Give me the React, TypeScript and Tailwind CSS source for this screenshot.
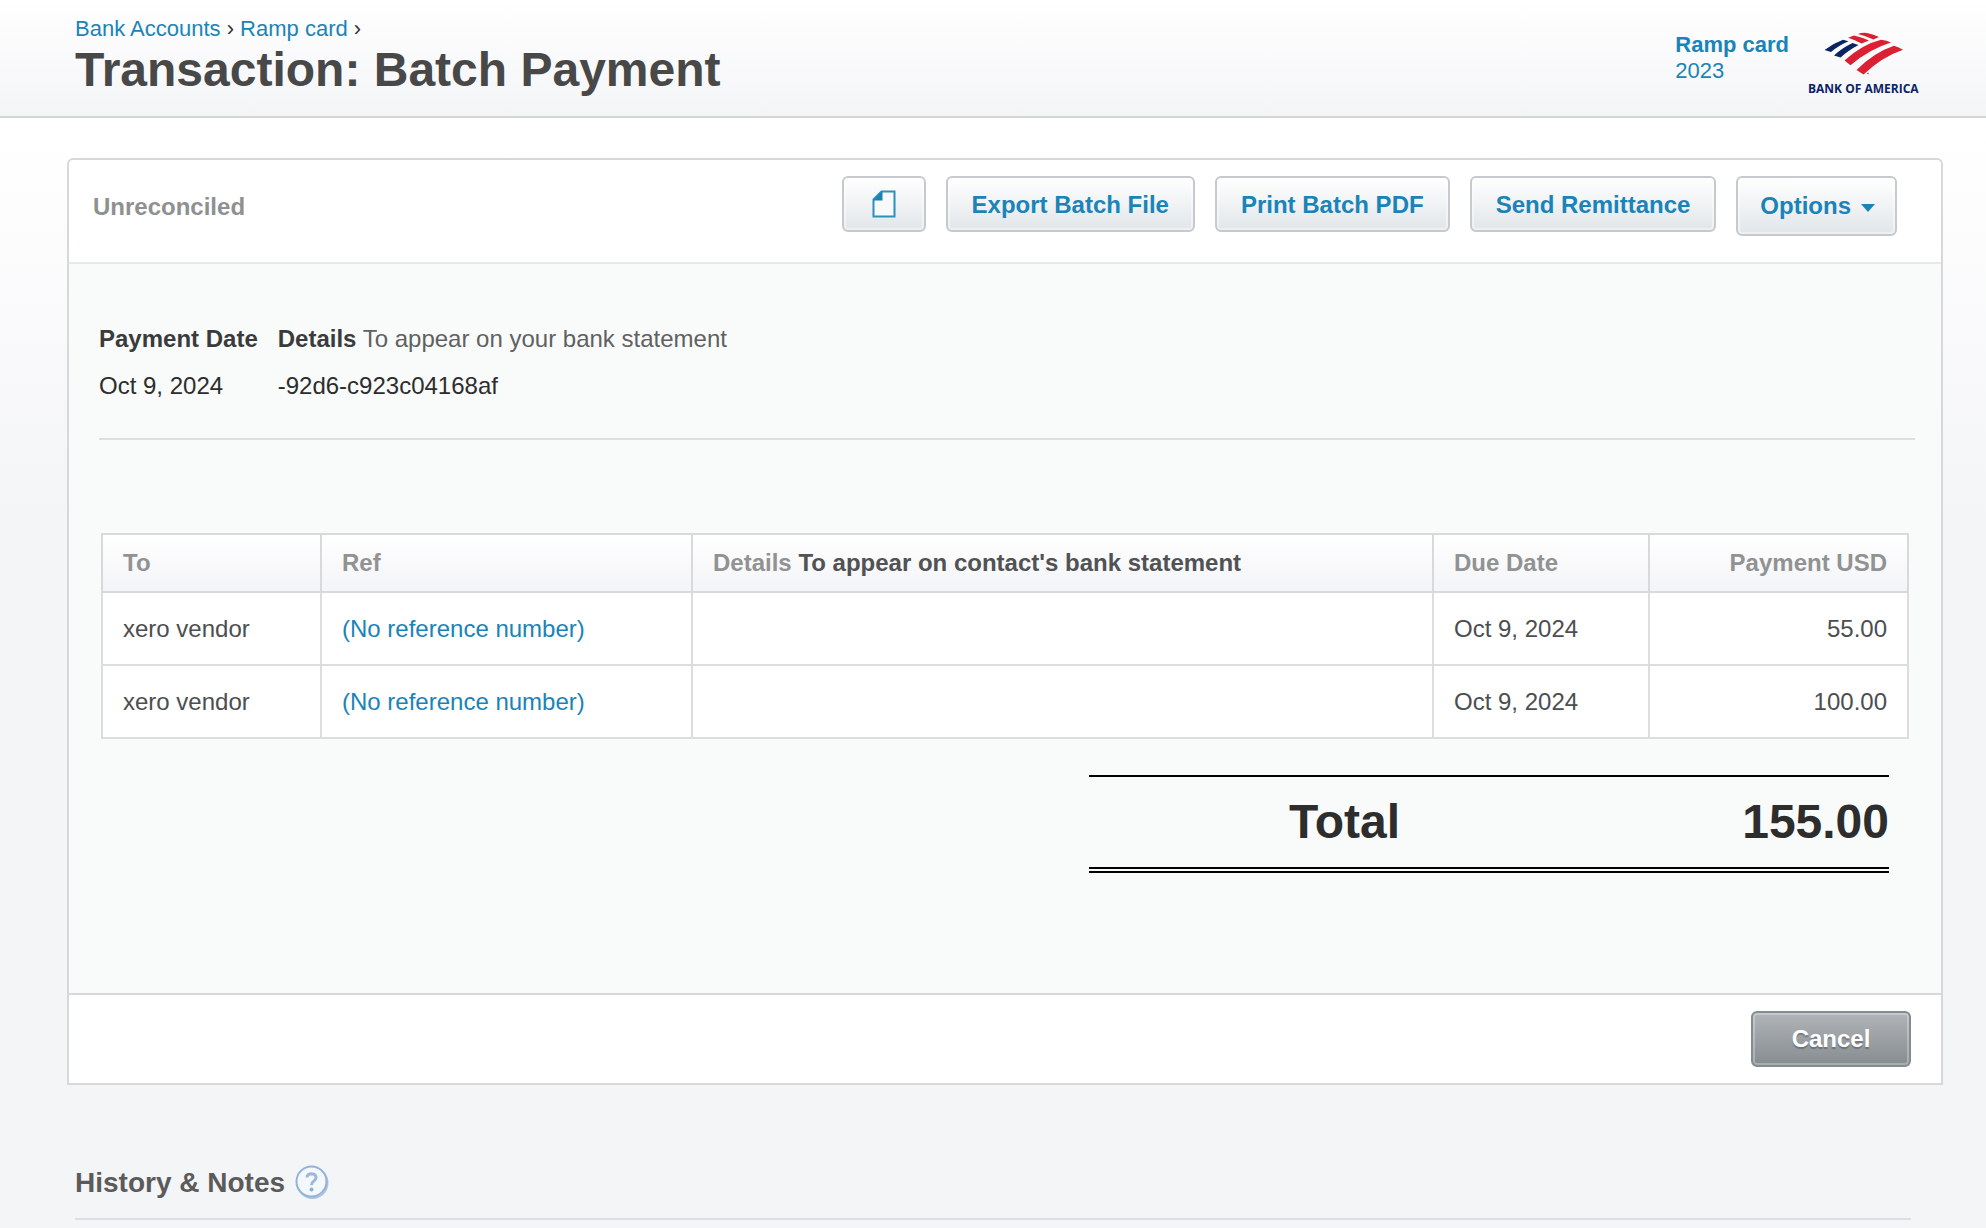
import type { ReactNode } from 'react';
import clsx from 'clsx';

const payments = [
  { id: 1, to: 'xero vendor', ref: '(No reference number)', details: '', dueDate: 'Oct 9, 2024', amount: '55.00' },
  { id: 2, to: 'xero vendor', ref: '(No reference number)', details: '', dueDate: 'Oct 9, 2024', amount: '100.00' },
];

const BankLogo = () => (
  <svg className="overflow-visible" width="112" height="66" viewBox="0 1 112 66" role="img" aria-label="Bank of America">
    <g fill="#dc2033">
      <path d="M51 3 Q55 1.3 60 2 Q67 3.6 72 6 L66.5 8.4 Q59 5 51 3Z" />
      <path d="M41 6.8 L47 4.4 Q56 6.5 62 9.6 L54.5 12.5 Q48 9 41 6.8Z" />
      <path d="M37.5 29.5 Q55 13.5 74 8.8 Q80 9.6 84 11.6 Q63 18 43.5 34.2 Z" />
      <path d="M49.5 39 Q67 21.5 87 14.8 Q92 16.3 96 18.8 Q75 26 56.5 43.5 Z" />
      <circle cx="61" cy="42.5" r="0.8" />
    </g>
    <g fill="#0a2463">
      <path d="M17.5 19 Q26 12.5 36 8.8 L41.5 10.2 Q31 14.8 24 21Z" />
      <path d="M27 24.5 Q35 17 45.5 12 L51.5 14 Q41 19.5 33.5 26.6Z" />
    </g>
    <text x="1" y="62" className="fill-[#0a2463] font-['Open_Sans',sans-serif] text-[12px] font-bold">BANK OF AMERICA</text>
  </svg>
);

const FileIcon = () => (
  <svg className="mx-auto" width="24" height="28" viewBox="0 0 24 28" aria-hidden="true">
    <path d="M1.5 9.5 L9.5 1.5 H22.5 V26.5 H1.5 Z" fill="#f8f9fa" stroke="#2c8fbd" strokeWidth="2" />
    <path d="M1 10.5 L10.5 1 V10.5 Z" fill="#1b83b3" />
  </svg>
);

const HelpIcon = () => (
  <svg width="34" height="34" viewBox="0 0 34 34" fill="none" aria-hidden="true">
    <circle cx="17.5" cy="18" r="15" stroke="#8fafd6" strokeWidth="2" opacity="0.7" />
    <circle cx="16.5" cy="16.5" r="15" fill="#f3f8fd" stroke="#94b2d8" strokeWidth="2" />
    <path d="M12 12.5 Q12.3 8.8 16.6 8.8 Q21 9 21 12.6 Q20.8 14.8 18.4 16.4 Q16.5 17.8 16.5 20.2" stroke="#9db8da" strokeWidth="3" />
    <circle cx="16.5" cy="24.5" r="2" fill="#8fafd6" />
  </svg>
);

const ToolbarButton = ({ children, className, label }: { children: ReactNode; className?: string; label?: string }) => (
  <button
    type="button"
    aria-label={label}
    className={clsx(
      'rounded-md border-2 border-[#c6cace] bg-linear-to-b from-white to-[#e2e6e9] font-bold text-[#1a84b8] shadow-[inset_0_0_0_2px_rgba(255,255,255,0.4)]',
      className ?? 'h-14 px-6 pt-0.5'
    )}
  >
    {children}
  </button>
);

const Header = () => (
  <header className="flex items-start justify-between border-b-2 border-[#d3d5d8] bg-linear-to-b from-white to-[#f4f5f7] pr-[67px] pb-[18px] pl-[75px]">
    <div className="pt-4">
      <nav aria-label="Breadcrumb" className="text-[22px] leading-[26px] text-[#333]">
        <a href="#accounts" className="text-[#1a84b8]">Bank Accounts</a> › <a href="#card" className="text-[#1a84b8]">Ramp card</a> ›
      </nav>
      <h1 className="text-5xl leading-[56px] font-bold text-[#484848]">Transaction: Batch Payment</h1>
    </div>
    <div className="flex gap-[18px] pt-8">
      <a href="#card" className="text-[22px] leading-[26px] text-[#1a84b8]">
        <strong className="block">Ramp card</strong>
        2023
      </a>
      <BankLogo />
    </div>
  </header>
);

const PaymentsTable = () => (
  <table className="w-full table-fixed border-collapse bg-white text-left text-[#4c4e4f] [&_td]:border-2 [&_td]:border-[#dcdddd] [&_td]:px-5 [&_th]:border-2 [&_th]:border-[#d8d9da] [&_th]:px-5">
    <thead>
      <tr className="h-[58px] bg-linear-to-b from-white to-[#f3f4f7] text-[#919292]">
        <th className="w-[219px]">To</th>
        <th className="w-[371px]">Ref</th>
        <th>Details <span className="text-[#505253]">To appear on contact's bank statement</span></th>
        <th className="w-[216px]">Due Date</th>
        <th className="w-[259px] text-right">Payment USD</th>
      </tr>
    </thead>
    <tbody>
      {payments.map((payment) => (
        <tr key={payment.id} className="h-[73px]">
          <td>{payment.to}</td>
          <td><a href="#payment" className="text-[#1a84b8]">{payment.ref}</a></td>
          <td>{payment.details}</td>
          <td>{payment.dueDate}</td>
          <td className="text-right">{payment.amount}</td>
        </tr>
      ))}
    </tbody>
  </table>
);

const App = () => {
  return (
    <div className="min-h-screen bg-[#f4f5f7] font-['Liberation_Sans',Arial,sans-serif] text-2xl leading-7">
      <Header />
      <main className="bg-linear-to-b from-white to-[#f4f5f7] to-[400px] pt-10 pr-[43px] pl-[67px]">
        <section className="rounded-t-md border-2 border-[#d6d8d9] bg-white">
          <div className="flex items-start justify-between border-b-2 border-[#e8eaea] pt-4 pr-11 pb-[26px] pl-6">
            <p className="pt-[17px] font-bold text-[#8f9090]">Unreconciled</p>
            <div className="flex items-start gap-5">
              <ToolbarButton label="Files" className="h-14 w-[84px]"><FileIcon /></ToolbarButton>
              <ToolbarButton>Export Batch File</ToolbarButton>
              <ToolbarButton>Print Batch PDF</ToolbarButton>
              <ToolbarButton>Send Remittance</ToolbarButton>
              <ToolbarButton className="flex h-[60px] items-center gap-2.5 pr-5 pl-[22px]">
                Options
                <svg className="mt-1" width="14" height="8" viewBox="0 0 14 8" aria-hidden="true"><path d="M0 0 H14 L7 8 Z" fill="#1a84b8" /></svg>
              </ToolbarButton>
            </div>
          </div>

          <div className="bg-[#f9fbfa] pt-[61px] pr-[26px] pb-[120px] pl-[30px]">
            <dl className="flex gap-5 border-b-2 border-[#dcdedf] pb-[38px] text-[#2d2d2d]">
              <div>
                <dt className="font-bold text-[#3a3b3c]">Payment Date</dt>
                <dd className="mt-[19px]">Oct 9, 2024</dd>
              </div>
              <div>
                <dt className="text-[#5f6162]"><b className="text-[#3a3b3c]">Details</b> To appear on your bank statement</dt>
                <dd className="mt-[19px]">-92d6-c923c04168af</dd>
              </div>
            </dl>

            <div className="mt-[93px] mr-1.5 ml-0.5">
              <PaymentsTable />
              <div className="mt-9 mr-5 ml-auto w-[800px] border-y-2 border-black pb-0.5">
                <div className="flex h-[92px] items-center justify-between border-b-2 border-black pl-[200px] text-5xl font-bold text-[#2d2d2d]">
                  <span>Total</span>
                  <span>155.00</span>
                </div>
              </div>
            </div>
          </div>

          <div className="flex justify-end border-t-2 border-[#d6d8d9] py-4 pr-[30px]">
            <button type="button" className="h-14 w-40 rounded-md border-2 border-[#858c8f] bg-linear-to-b from-[#b1b4b9] to-[#868d90] font-bold text-white shadow-[inset_0_0_0_2px_rgba(255,255,255,0.28)] text-shadow-[0_2px_1px_rgba(0,0,0,0.25)]">
              Cancel
            </button>
          </div>
        </section>

        <section className="mt-[78px] mr-8 ml-2 flex items-center gap-2.5 border-b-2 border-[#dddfe2] pb-[17px]">
          <h2 className="pt-0.5 text-[28px] leading-9 font-bold text-[#5b5b5b]">History &amp; Notes</h2>
          <button type="button" aria-label="Help with history and notes"><HelpIcon /></button>
        </section>
      </main>
    </div>
  );
};

export default App;
